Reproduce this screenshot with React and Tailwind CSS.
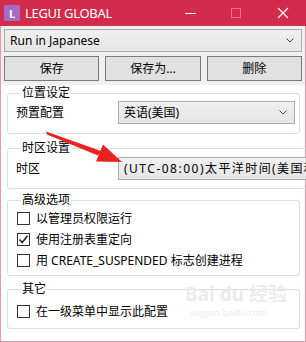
import React from 'react';

const font = { fontFamily: '"Noto Sans", "Noto Sans CJK SC", sans-serif' };

const Chevron = () => (
  <svg width="8" height="5" viewBox="0 0 8 5" className="shrink-0">
    <path d="M0.5 0.5 L4 4 L7.5 0.5" fill="none" stroke="#444" strokeWidth="1" />
  </svg>
);

const Select = ({ children, className = '' }) => (
  <div
    className={`flex items-center h-[23px] border border-[#acacac] bg-gradient-to-b from-[#f0f0f0] to-[#e5e5e5] pl-[5px] pr-[7px] ${className}`}
  >
    <span className="flex-1 mr-[4px] overflow-hidden whitespace-nowrap text-[12px] leading-[16px] text-black">
      {children}
    </span>
    <Chevron />
  </div>
);

const Group = ({ title, className = '', children }) => (
  <fieldset
    className={`border border-[#d5dfe5] rounded-[3px] pl-[8px] pr-[4px] ${className}`}
  >
    <legend className="ml-[5px] px-[1px] text-[12px] leading-[16px] text-black">
      {title}
    </legend>
    {children}
  </fieldset>
);

const Check = ({ checked, label }) => (
  <div className="flex items-center h-[21px] pl-[1px]">
    <div className="w-[13px] h-[13px] border border-[#333333] bg-white flex items-center justify-center">
      {checked && (
        <svg width="11" height="11" viewBox="0 0 11 11">
          <path d="M1.5 5.5 L4.2 8.5 L9.5 1.8" fill="none" stroke="#222" strokeWidth="1.5" />
        </svg>
      )}
    </div>
    <span className="ml-[6px] text-[12px] leading-[16px] text-black whitespace-nowrap">
      {label}
    </span>
  </div>
);

export default function App() {
  return (
    <div className="relative w-[306px] h-[342px] bg-white overflow-hidden" style={font}>
      {/* title bar */}
      <div className="flex items-center h-[26px] bg-[#d22b4c] text-white">
        <div className="ml-[4px] w-[16px] h-[16px] rounded-[2px] bg-[#a36bc4] flex items-center justify-center text-[11px] font-bold leading-none">
          L
        </div>
        <span className="ml-[5px] text-[13px] leading-[18px] tracking-[-0.3px]">LEGUI GLOBAL</span>
        <div className="flex-1" />
        <div className="w-[11px] h-px bg-white mr-[35px] mt-[1px]" />
        <div className="w-[10px] h-[10px] border border-[#e2738b] mr-[36px]" />
        <svg width="12" height="12" viewBox="0 0 12 12" className="mr-[17px]">
          <path d="M1 1 L11 11 M11 1 L1 11" stroke="white" strokeWidth="1.2" />
        </svg>
      </div>

      <div className="h-[316px] border-x border-b border-[#e39aab] flex flex-col">
        {/* top panel */}
        <div className="bg-[#f0f0f0] px-[3px] pt-[3px] pb-[4px]">
          <Select className="pl-[5px]">Run in Japanese</Select>
          <div className="flex gap-[6px] mt-[4px]">
            {['保存', '保存为...', '删除'].map((t) => (
              <div
                key={t}
                className="flex-1 h-[25px] border border-[#7a7a7a] bg-[#e1e1e1] flex items-center justify-center text-[12px] text-black"
              >
                {t}
              </div>
            ))}
          </div>
        </div>

        {/* groups */}
        <div className="relative flex-1 pl-[6px] pr-[5px]">
          <Group title="位置设定" className="pb-[9px]">
            <div className="flex items-center">
              <span className="w-[102px] text-[12px] leading-[16px]">预置配置</span>
              <Select className="flex-1">英语(美国)</Select>
            </div>
          </Group>

          <Group title="时区设置" className="mt-[6px] pb-[8px]">
            <div className="flex items-center mt-[1px]">
              <span className="w-[102px] text-[12px] leading-[16px]">时区</span>
              <Select className="flex-1">
                <span className="tracking-[1.5px]">(UTC-08:00)</span>
                <span className="tracking-[1.4px]">太平洋时间(美国和加拿大)</span>
              </Select>
            </div>
          </Group>

          <Group title="高级选项" className="mt-[3px] pb-[4px]">
            <Check label="以管理员权限运行" />
            <Check checked label="使用注册表重定向" />
            <Check label="用 CREATE_SUSPENDED 标志创建进程" />
          </Group>

          <Group title="其它" className="mt-[5px] pb-[6px]">
            <div className="pt-[4px]">
              <Check label="在一级菜单中显示此配置" />
            </div>
          </Group>

          {/* watermark */}
          <div className="absolute left-[184px] top-[200px] text-[#ececec] leading-none whitespace-nowrap pointer-events-none">
            <div className="text-[19px] font-bold">Bai du 经验</div>
            <div className="text-[9px] mt-[4px] ml-[4px]">jingyan.baidu.com</div>
          </div>
        </div>
      </div>

      {/* red arrow annotation */}
      <svg className="absolute left-0 top-0 pointer-events-none" width="306" height="342">
        <polygon points="46,131.5 101,151 98,155.5 47,134.5" fill="#e8231f" />
        <polygon points="122,162 103,144.5 96,161.5" fill="#e8231f" />
      </svg>
    </div>
  );
}
